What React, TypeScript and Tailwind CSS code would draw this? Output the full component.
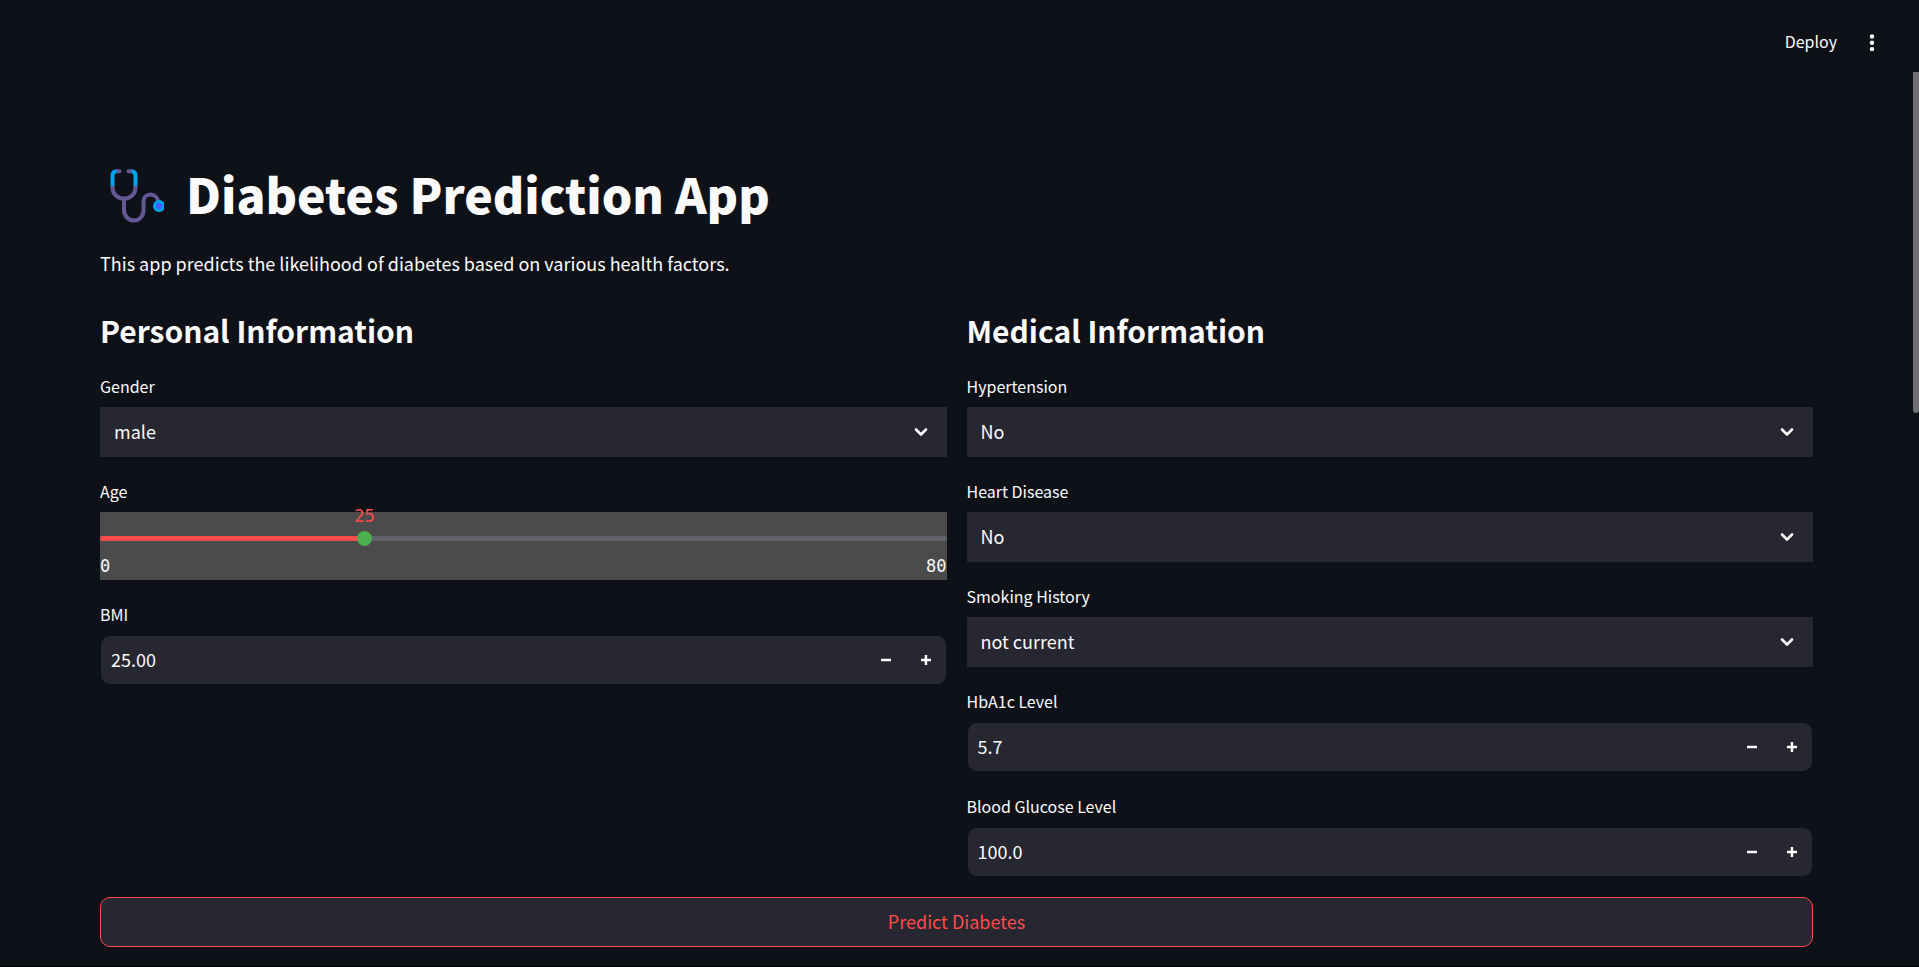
import { useId, useState } from "react";

function StethoscopeIcon() {
  return (
    <svg width="56" height="56" viewBox="0 0 56 56" fill="none" aria-hidden="true" className="shrink-0">
      <path
        d="M4.5 17v2.5c0 6.5 5 11 11.5 11s11.500-4.500 11.500-11V17M16 30.500v11.500c0 6 4.500 10.500 10 10.500s9.500-4.500 9.500-10.500v-8.500c0-4 3-7 7-7s7.500 3 8 8"
        stroke="#635994"
        strokeWidth="4"
      />
      <path d="M9.500 3.200H8.500c-2.600 0-4 1.500-4 4.500v10M22.500 3.200H23.500c2.600 0 4 1.500 4 4.500v10" stroke="#00a6ed" strokeWidth="4" />
      <path d="M11.500 3.200H10M20.500 3.200H22" stroke="#635994" strokeWidth="4" strokeLinecap="round" />
      <circle cx="51" cy="38" r="6" fill="#00a6ed" />
      <circle cx="51" cy="38" r="3.200" fill="#3f5fff" />
    </svg>
  );
}

function ChevronIcon() {
  return (
    <svg
      width="14"
      height="10"
      viewBox="0 0 14 10"
      fill="none"
      stroke="#fafafa"
      strokeWidth="2.600"
      strokeLinecap="round"
      strokeLinejoin="round"
      aria-hidden="true"
      className="pointer-events-none mr-[19px] self-center justify-self-end [grid-area:1/1]"
    >
      <path d="M2 2.500l5 5 5-5" />
    </svg>
  );
}

const labelClass = "flex h-[30px] items-center pb-0.5 text-base leading-6";

function SelectField({ label, options }: { label: string; options: string[] }) {
  const id = useId();
  const [value, setValue] = useState(options[0]);
  return (
    <div className="flex flex-col gap-[5px]">
      <label htmlFor={id} className={labelClass}>{label}</label>
      <div className="grid">
        <select
          id={id}
          value={value}
          onChange={(e) => setValue(e.target.value)}
          className="h-[50px] w-full appearance-none bg-[#262730] pb-0.5 pl-[14px] pr-12 text-lg outline-none [grid-area:1/1]"
        >
          {options.map((o) => (
            <option key={o}>{o}</option>
          ))}
        </select>
        <ChevronIcon />
      </div>
    </div>
  );
}

function NumberField({ label, initial, digits, step }: { label: string; initial: number; digits: number; step: number }) {
  const id = useId();
  const [text, setText] = useState(initial.toFixed(digits));
  const bump = (d: number) => setText(((parseFloat(text) || 0) + d).toFixed(digits));
  return (
    <div className="flex flex-col gap-[5px]">
      <label htmlFor={id} className={labelClass}>{label}</label>
      <div className="flex h-[50px] overflow-hidden rounded-[10px] border border-[#0e1117] bg-[#262730]">
        <input
          id={id}
          inputMode="decimal"
          value={text}
          onChange={(e) => setText(e.target.value)}
          className="min-w-0 flex-1 bg-transparent pb-0.5 pl-[10px] text-lg outline-none"
        />
        <button type="button" aria-label={`Decrease ${label}`} onClick={() => bump(-step)} className="flex w-10 items-center justify-center">
          <svg width="10" height="10" viewBox="0 0 10 10" fill="#fafafa" aria-hidden="true">
            <path d="M0 3.700h10v2.500H0z" />
          </svg>
        </button>
        <button type="button" aria-label={`Increase ${label}`} onClick={() => bump(step)} className="flex w-10 items-center justify-center">
          <svg width="10" height="10" viewBox="0 0 10 10" fill="#fafafa" aria-hidden="true">
            <path d="M3.700 0h2.500v3.700H10v2.500H6.200V10H3.700V6.200H0V3.700h3.700z" />
          </svg>
        </button>
      </div>
    </div>
  );
}

function AgeSlider() {
  const id = useId();
  const [age, setAge] = useState(25);
  const percent = `${(age / 80) * 100}%`;
  return (
    <div className="flex flex-col gap-[5px]">
      <label htmlFor={id} className={labelClass}>Age</label>
      <div className="relative flex flex-col bg-[#4b4b4b] pt-[19px] font-['DejaVu_Sans_Mono',monospace] text-[17px] leading-5">
        <output
          htmlFor={id}
          className="absolute -top-1.5 -translate-x-1/2 text-[#ff4b4b]"
          style={{ left: percent }}
        >
          {age}
        </output>
        <div className="grid h-[15px] items-center">
          <div className="h-[5px] overflow-hidden rounded-full bg-[#62636a] [grid-area:1/1]">
            <div className="h-full bg-[#ff4b4b]" style={{ width: percent }} />
          </div>
          <input
            id={id}
            type="range"
            min={0}
            max={80}
            value={age}
            onChange={(e) => setAge(Number(e.target.value))}
            className="z-10 -mx-2 h-[15px] appearance-none bg-transparent outline-none [grid-area:1/1] [&::-webkit-slider-thumb]:size-[15px] [&::-webkit-slider-thumb]:appearance-none [&::-webkit-slider-thumb]:rounded-full [&::-webkit-slider-thumb]:bg-[#4caf50]"
          />
        </div>
        <div className="flex justify-between pb-1 pt-[10px]">
          <span>0</span>
          <span>80</span>
        </div>
      </div>
    </div>
  );
}

export default function App() {
  return (
    <div className="flex min-h-screen flex-col border-b border-black bg-[#0e1117] font-['Noto_Sans_CJK_SC',sans-serif] text-[#fafafa]">
      <header className="flex h-[72px] items-center justify-end gap-[30px] pr-[42px] pt-[13px]">
        <button type="button" className="pb-[3px] text-base leading-6">Deploy</button>
        <button type="button" aria-label="Main menu">
          <svg width="10" height="20" viewBox="0 0 10 20" fill="#fafafa" aria-hidden="true">
            <circle cx="5" cy="3.500" r="2.200" />
            <circle cx="5" cy="9.800" r="2.200" />
            <circle cx="5" cy="16.100" r="2.200" />
          </svg>
        </button>
      </header>
      <div className="flex flex-1">
        <main className="flex flex-1 flex-col gap-5 px-[100px] pt-[92px] pb-[19px]">
          <h1 className="flex h-[66px] items-center gap-[22px] pb-0.5 pl-2 text-5xl font-extrabold leading-[58px]">
            <StethoscopeIcon />
            <span className="pb-1.5">Diabetes Prediction App</span>
          </h1>
          <p className="h-[30px] text-lg leading-[27px]">
            This app predicts the likelihood of diabetes based on various health factors.
          </p>
          <form className="flex flex-col gap-5 pt-[10px]" onSubmit={(e) => e.preventDefault()}>
            <div className="grid grid-cols-2 gap-5">
              <section className="flex flex-col gap-5">
                <h2 className="h-[42px] text-[30px] font-semibold leading-10">Personal Information</h2>
                <SelectField label="Gender" options={["male", "female"]} />
                <AgeSlider />
                <NumberField label="BMI" initial={25} digits={2} step={0.01} />
              </section>
              <section className="flex flex-col gap-5">
                <h2 className="h-[42px] text-[30px] font-semibold leading-10">Medical Information</h2>
                <SelectField label="Hypertension" options={["No", "Yes"]} />
                <SelectField label="Heart Disease" options={["No", "Yes"]} />
                <SelectField label="Smoking History" options={["not current", "never", "former", "current", "ever"]} />
                <NumberField label="HbA1c Level" initial={5.7} digits={1} step={0.1} />
                <NumberField label="Blood Glucose Level" initial={100} digits={1} step={1} />
              </section>
            </div>
            <button
              type="submit"
              className="h-[50px] w-full rounded-[10px] border border-[#ff4b4b] bg-[#262730] pb-0.5 text-lg text-[#ff4b4b]"
            >
              Predict Diabetes
            </button>
          </form>
        </main>
        <div className="h-[341px] w-1.5 rounded-b-sm bg-[#6f7074]" aria-hidden="true" />
      </div>
    </div>
  );
}
